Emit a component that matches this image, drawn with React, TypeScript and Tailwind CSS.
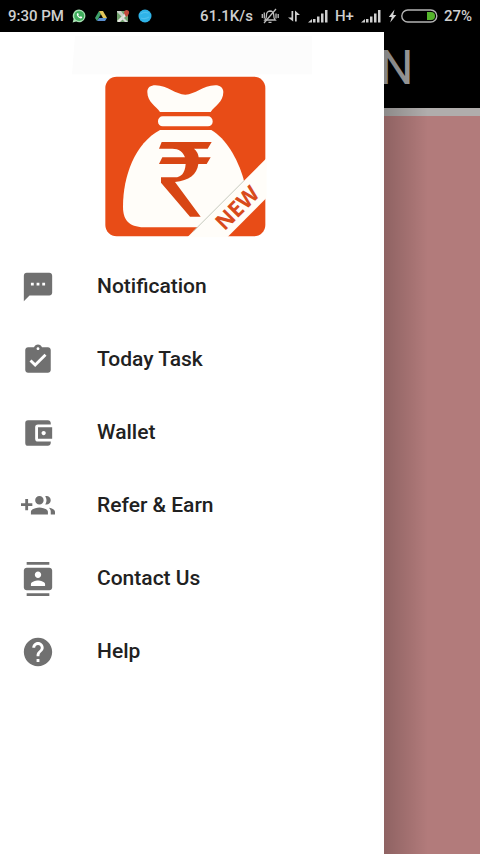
import type { ComponentType } from 'react'
import {
  MdAccountBalanceWallet,
  MdAssignmentTurnedIn,
  MdContacts,
  MdHelp,
  MdTextsms,
} from 'react-icons/md'

type IconProps = { className?: string }

function GroupAddIcon({ className }: IconProps) {
  return (
    <svg viewBox="0 0 24 24" className={className} fill="currentColor" aria-hidden="true">
      <path d="M8 10H5V7H3v3H0v2h3v3h2v-3h3v-2zm10 1c1.66 0 2.99-1.34 2.99-3S19.66 5 18 5c-.32 0-.63.05-.91.14.57.81.9 1.79.9 2.860s-.34 2.040-.9 2.860c.28.09.59.14.91.14zm-5 0c1.660 0 2.990-1.340 2.990-3S14.660 5 13 5c-1.660 0-3 1.340-3 3s1.340 3 3 3zm6.620 2.160c.83.73 1.380 1.660 1.380 2.840v2h3v-2c0-1.540-2.370-2.490-4.380-2.840zM13 13c-2 0-6 1-6 3v2h12v-2c0-2-4-3-6-3z" />
    </svg>
  )
}

const menuItems: { href: string; label: string; icon: ComponentType<IconProps> }[] = [
  { href: '#notification', label: 'Notification', icon: MdTextsms },
  { href: '#today-task', label: 'Today Task', icon: MdAssignmentTurnedIn },
  { href: '#wallet', label: 'Wallet', icon: MdAccountBalanceWallet },
  { href: '#refer', label: 'Refer & Earn', icon: GroupAddIcon },
  { href: '#contact', label: 'Contact Us', icon: MdContacts },
  { href: '#help', label: 'Help', icon: MdHelp },
]

function WhatsappIcon() {
  return (
    <svg viewBox="0 0 14 14" className="size-[14px]" aria-hidden="true">
      <path d="M7.200.6a6.300 6.300 0 1 1-3 11.900L.6 13.400l1-3.400A6.300 6.300 0 0 1 7.200.6z" fill="#a9e3b4" />
      <circle cx="7.200" cy="6.900" r="5" fill="#3fae5c" />
      <path d="M5.300 4.200c-1 1-.4 2.500.8 3.800s2.900 2 3.900 1l.2-.9-1.500-.8-.7.700c-.9-.3-1.500-.9-1.800-1.700l.6-.7L6.100 4z" fill="#fff" />
    </svg>
  )
}

function DriveIcon() {
  return (
    <svg viewBox="0 0 14 14" className="size-[14px]" aria-hidden="true">
      <path d="M5 2 1 9l2 3 4-7z" fill="#3fa06a" />
      <path d="M5 2h4l4 7H9z" fill="#e3c65a" />
      <path d="M3 12 5 9h8l-2 3z" fill="#5b8fd0" />
    </svg>
  )
}

function MapsIcon() {
  return (
    <svg viewBox="0 0 14 14" className="size-[14px]" aria-hidden="true">
      <rect x="1" y="2" width="11" height="11" rx="1" fill="#6fa06c" />
      <path d="m1 12 9-9 2 2-8 8H2z" fill="#e6e6e0" />
      <path d="m7 8 5 5H9L5 9z" fill="#d9d9d9" />
      <path d="M1 2h4l3 4-2 2-5-5z" fill="#c9d0c9" />
      <path d="M10.500 1a2.600 2.600 0 0 1 2.600 2.600c0 1.900-2.600 4.400-2.600 4.400S8 5.500 8 3.600A2.600 2.600 0 0 1 10.500 1z" fill="#c0483c" />
    </svg>
  )
}

function GlobeIcon() {
  return (
    <svg viewBox="0 0 14 14" className="size-[14px]" aria-hidden="true">
      <circle cx="7" cy="7" r="6.500" fill="#2fb3e8" />
      <path d="M2.500 5c3-2 5-2 8-1M3 9c3 1 5 1 8-1" stroke="#4cc0ee" strokeWidth="1.200" fill="none" />
    </svg>
  )
}

function BellOffIcon() {
  return (
    <svg viewBox="0 0 20 18" className="h-[18px] w-[20px]" fill="none" stroke="#bdbdbd" strokeWidth="1.300" aria-hidden="true">
      <path d="M5 13c1-1 1.500-2 1.500-5A3.800 3.800 0 0 1 10 4c2.400 0 3.700 1.700 3.700 4 0 3 .5 4 1.500 5z" />
      <path d="M8.500 15.300h3M4 16 16 2M2.300 7v4M4.300 5.500v6M16 6.500v5M18.200 7v4" />
    </svg>
  )
}

function DataIcon() {
  return (
    <svg viewBox="0 0 14 14" className="size-[14px]" fill="#cfcfcf" aria-hidden="true">
      <path d="M4.500 2h1.700v10.500L1 8.500h3.500z" />
      <path d="M8 1.500 13 6H9.700v6.500H8z" />
    </svg>
  )
}

function SignalIcon() {
  return (
    <svg viewBox="0 0 20 14" className="h-[14px] w-[20px]" fill="#cfcfcf" aria-hidden="true">
      <path d="M0 13.500 4 10v3.500z" />
      <rect x="5" y="10" width="2.500" height="3.500" />
      <rect x="9" y="7.500" width="2.500" height="6" />
      <rect x="13" y="4.500" width="2.500" height="9" />
      <rect x="17" y="1" width="2.500" height="12.500" />
    </svg>
  )
}

function BatteryIcon() {
  return (
    <svg viewBox="0 0 50 14" className="h-[14px] w-[50px]" aria-hidden="true">
      <path d="M6.500.500.800 8h3l-1.600 5.500L8.300 6H5.200z" fill="#d5d5d5" />
      <rect x="13.800" y="1" width="35" height="12" rx="6" fill="none" stroke="#b4b4b4" strokeWidth="1.400" />
      <path d="M39 3h4a4 4 0 0 1 0 8h-4z" fill="#55b52c" />
    </svg>
  )
}

function StatusBar() {
  return (
    <div className="flex h-8 items-center justify-between bg-black px-2 text-[15px] font-medium text-[#cfcfcf]">
      <div className="flex items-center gap-2">
        <span>9:30 PM</span>
        <WhatsappIcon />
        <DriveIcon />
        <MapsIcon />
        <GlobeIcon />
      </div>
      <div className="flex items-center gap-[7px]">
        <span>61.1K/s</span>
        <BellOffIcon />
        <DataIcon />
        <SignalIcon />
        <span>H+</span>
        <SignalIcon />
        <div className="flex items-center gap-[6px]">
          <BatteryIcon />
          <span>27%</span>
        </div>
      </div>
    </div>
  )
}

// Money bag on an orange tile, with the "NEW" ribbon across the corner
function Logo() {
  return (
    <svg viewBox="36 6 720 630" className="mx-auto w-[240px]" role="img" aria-label="Money bag">
      <path d="M45 18h715v115H36z" fill="#fcfcfc" />
      <rect x="136" y="140" width="480" height="479" rx="34" fill="#e84c17" />
      <g fill="#fffdf9">
        <path d="M300 246c-12-18-38-30-38-60 0-14 10-20 24-20 38 0 60 28 90 28s52-28 90-28c14 0 24 8 24 20 0 30-26 42-38 60z" />
        <rect x="294" y="259" width="164" height="30" rx="14" />
        <path d="M300 300h154c44 26 78 84 96 145 8 30 10 60 8 90-4 46-30 57-80 57H260c-48 0-71-16-71-62 0-92 36-190 111-230z" />
      </g>
      <path
        d="M305 336H455L443 356H402q12 10 14 26h36l-12 20h-25c-4 32-28 50-70 54l77 104h-32L303 458v-16h42c18 0 30-12 32-40H297l10-20h68c-6-16-18-26-38-26h-40z"
        fill="#d84614"
      />
      <path d="M620 384 382 622h120l118-119z" fill="#fffdf9" />
      <path d="M552 452 400 604" stroke="#c5c9bd" strokeWidth="3" />
      <text
        x="548"
        y="550"
        transform="rotate(-45 548 550)"
        textAnchor="middle"
        className="fill-[#d84a1c] font-['Open_Sans',sans-serif] text-[66px] font-bold"
      >
        NEW
      </text>
    </svg>
  )
}

function Drawer() {
  return (
    <aside className="absolute inset-y-0 left-0 flex w-4/5 flex-col bg-white">
      <Logo />
      <nav className="mt-2">
        {menuItems.map(({ href, label, icon: Icon }) => (
          <a key={href} href={href} className="flex h-[73px] items-center gap-[42px] pl-[21px]">
            <Icon className="size-[34px] text-[#707070]" />
            <span className="text-[21px] font-medium text-[#212121]">{label}</span>
          </a>
        ))}
      </nav>
      {/* Shadow cast on the page behind */}
      <div className="absolute inset-y-0 left-full w-11 bg-linear-to-r from-black/20 to-transparent" />
    </aside>
  )
}

export default function App() {
  return (
    <div className="flex min-h-screen flex-col font-[Roboto,sans-serif]">
      <StatusBar />
      <div className="relative flex min-h-[700px] flex-1 flex-col overflow-hidden bg-[#b27b7b]">
        <header className="flex h-[84px] items-center border-b-8 border-[#b0adac] bg-black pb-1 pl-[79%]">
          <h1 className="text-5xl leading-none text-[#a3a3a3]">N</h1>
        </header>
        <Drawer />
      </div>
    </div>
  )
}
